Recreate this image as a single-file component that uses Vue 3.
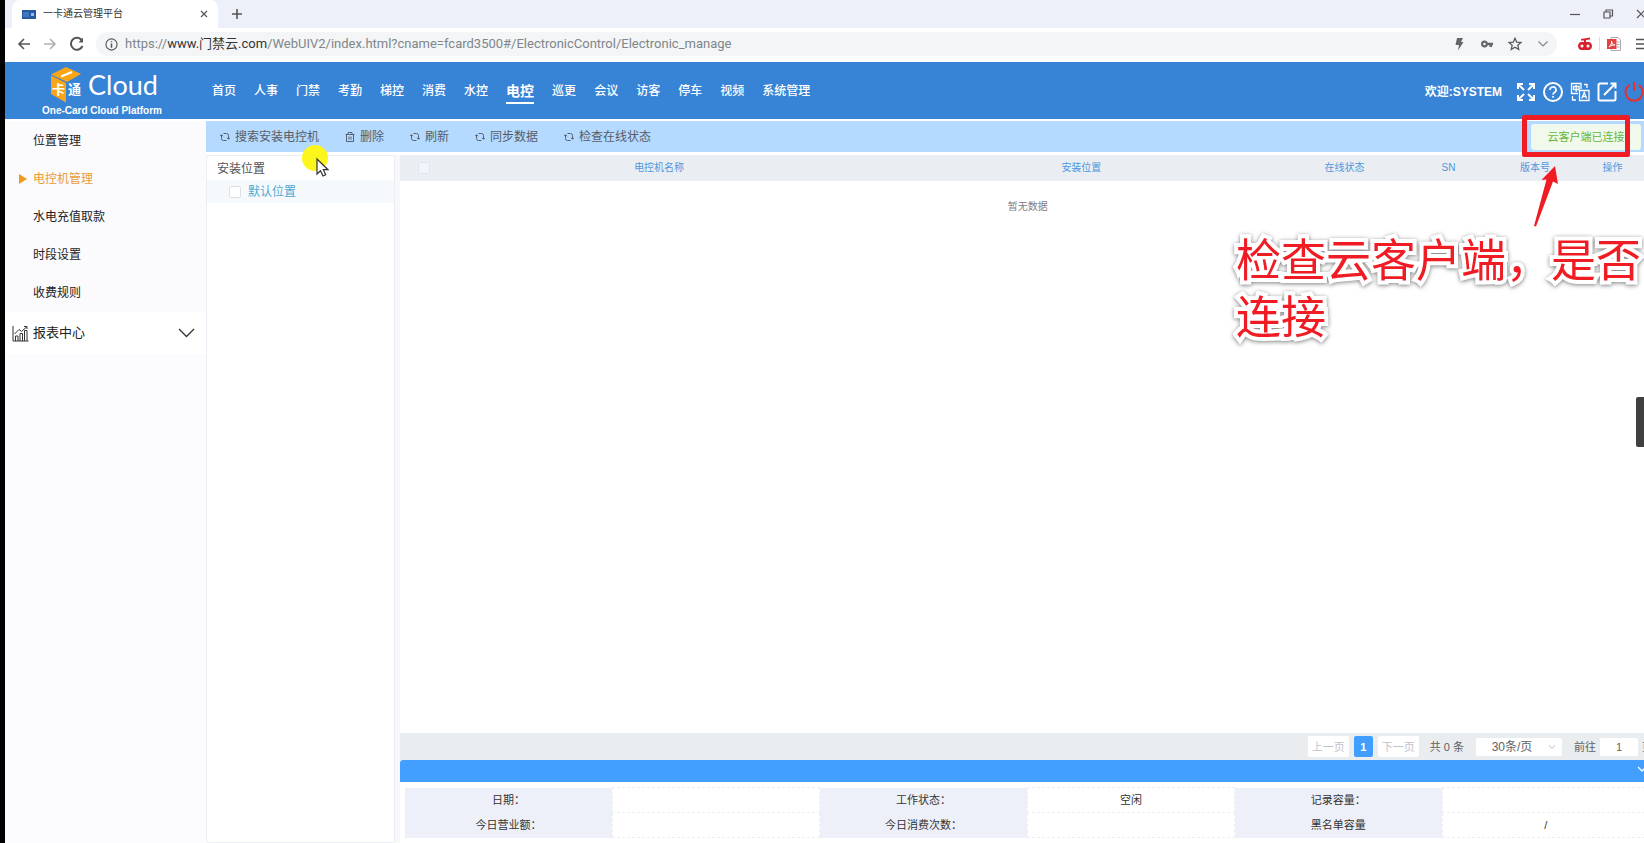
<script setup>
import { ref } from 'vue'

const modules = ['首页', '人事', '门禁', '考勤', '梯控', '消费', '水控', '电控', '巡更', '会议', '访客', '停车', '视频', '系统管理']
const activeModule = ref('电控')

const menu = ['位置管理', '电控机管理', '水电充值取款', '时段设置', '收费规则']
const activeMenu = ref('电控机管理')

const actions = [
  { label: '搜索安装电控机', icon: 'sync' },
  { label: '删除', icon: 'trash' },
  { label: '刷新', icon: 'sync' },
  { label: '同步数据', icon: 'sync' },
  { label: '检查在线状态', icon: 'sync' },
]

const columns = [
  { label: '电控机名称', cls: 'wide' },
  { label: '安装位置', cls: 'wide' },
  { label: '在线状态', cls: 'mid' },
  { label: 'SN', cls: 'mid' },
  { label: '版本号', cls: 'narrow' },
  { label: '操作', cls: 'ops' },
]

const info = [
  [['日期：', ''], ['工作状态：', '空闲'], ['记录容量：', '']],
  [['今日营业额：', ''], ['今日消费次数：', ''], ['黑名单容量', '/']],
]

const pageSize = ref('30条/页')
const pageNo = ref('1')
</script>

<template>
  <div class="screen">
    <div class="window">
      <div class="tabs">
        <div class="tab">
          <svg class="favicon" viewBox="0 0 14 9"><rect width="14" height="9" fill="#27599f" /><rect x="1" y="2" width="6" height="5" fill="#3f78bf" /><rect x="9" y="3" width="3" height="3" fill="#9fbcdc" /></svg>
          <span class="tab-title">一卡通云管理平台</span>
          <button class="icon-btn" aria-label="关闭标签页"><svg width="8" height="8" viewBox="0 0 8 8" class="line"><path d="M1 1l6 6M7 1l-6 6" /></svg></button>
        </div>
        <button class="icon-btn new-tab" aria-label="新标签页"><svg width="12" height="12" viewBox="0 0 12 12" class="line thick"><path d="M6 1v10M1 6h10" /></svg></button>
        <div class="win-controls">
          <button class="icon-btn" aria-label="最小化"><svg width="12" height="12" viewBox="0 0 12 12" class="line"><path d="M1 6.500h10" /></svg></button>
          <button class="icon-btn" aria-label="还原"><svg width="12" height="12" viewBox="0 0 12 12" class="line"><path d="M2 4h6v6H2zM4 4V2h6.500v6H8" /></svg></button>
          <button class="icon-btn" aria-label="关闭"><svg width="12" height="12" viewBox="0 0 12 12" class="line"><path d="M2 2l8 8M10 2l-8 8" /></svg></button>
        </div>
      </div>

      <div class="address">
        <div class="nav-btns">
          <button class="icon-btn" aria-label="后退"><svg width="14" height="14" viewBox="0 0 14 14" class="line thick"><path d="M13 7H2M7 2L2 7l5 5" /></svg></button>
          <button class="icon-btn faded" aria-label="前进"><svg width="14" height="14" viewBox="0 0 14 14" class="line thick"><path d="M1 7h11M7 2l5 5-5 5" /></svg></button>
          <button class="icon-btn" aria-label="重新加载"><svg width="16" height="16" viewBox="0 0 16 16" class="line bold"><path d="M13.500 10A6 6 0 1 1 13 4.500" /><path d="M14 1.500v5H9.500z" fill="#555" stroke="none" /></svg></button>
        </div>
        <div class="url-pill">
          <svg width="13" height="13" viewBox="0 0 14 14" class="line"><circle cx="7" cy="7" r="6" /><path d="M7 6v4.500M7 3.500v1.200" stroke-width="1.600" /></svg>
          <span class="url">https://<b>www.门禁云.com</b>/WebUIV2/index.html?cname=fcard3500#/ElectronicControl/Electronic_manage</span>
          <svg width="16" height="16" viewBox="0 0 16 16"><path d="M6 2h6l-2 4h2.500L7 14.500 8 9H4.500z" fill="#666" /></svg>
          <svg width="16" height="16" viewBox="0 0 16 16"><path fill-rule="evenodd" fill="#666" d="M5.500 4.500a3.500 3.500 0 0 1 3.300 2.300H14v2.400h-1V11h-2.500V9.200H8.800A3.500 3.500 0 1 1 5.500 4.500zm0 2.200a1.300 1.300 0 1 0 0 2.600 1.300 1.300 0 0 0 0-2.600z" /></svg>
          <svg width="16" height="16" viewBox="0 0 16 16" class="line"><path d="M8 2.200l1.700 3.900 4.300.4-3.200 2.800 1 4.200L8 11.300l-3.800 2.200 1-4.200L2 6.500l4.300-.4z" /></svg>
          <svg width="16" height="16" viewBox="0 0 16 16" class="line soft"><path d="M3.500 5.500L8 10l4.500-4.500" /></svg>
        </div>
        <div class="ext">
          <svg width="16" height="16" viewBox="0 0 16 16"><path d="M4 3l9-1.500v2L9 4v2h3c4 1 4 7 0 8H4c-4-1-4-7 0-8h3V4.500H4z" fill="#d8232e" /><circle cx="5" cy="10" r="1.500" fill="#fff" /><circle cx="11" cy="10" r="1.500" fill="#fff" /></svg>
          <i class="sep"></i>
          <svg width="16" height="16" viewBox="0 0 16 16"><path d="M5 1.500h7l2.500 2.500v10.500H5z" fill="#fff" stroke="#aaa" /><path d="M11 6h2.500M11 8.500h2.500M11 11h2.500" stroke="#aaa" /><rect x="1" y="3" width="9.500" height="10" fill="#e34343" /><path d="M3 11c2-2 3-4 2.500-6 .5 3 1.500 4 3.500 4-2-.3-4 .4-6 2z" fill="none" stroke="#fff" /></svg>
          <svg width="16" height="16" viewBox="0 0 16 16" class="line thick"><path d="M2 3.500h13M2 8h13M2 12.500h13" /></svg>
        </div>
      </div>

      <header class="header">
        <div class="brand">
          <div class="brand-top">
            <svg class="cube" viewBox="0 0 32 36">
              <path d="M16 0l15 7-14 8L1 7.500z" fill="#f9a51a" />
              <path d="M1 8.500L16 16v19.500L1 27z" fill="#f9a51a" />
              <path d="M11 9.500l11-4.500" stroke="#fff" stroke-width="2" />
              <text x="2" y="27" font-size="13">卡</text>
              <text x="18" y="27" font-size="13">通</text>
            </svg>
            <span class="brand-name">Cloud</span>
          </div>
          <div class="brand-sub">One-Card Cloud Platform</div>
        </div>
        <nav class="modules">
          <a v-for="m in modules" :key="m" href="#" :class="{ active: m === activeModule }" @click.prevent="activeModule = m">{{ m }}</a>
        </nav>
        <div class="user">
          <span class="welcome">欢迎:SYSTEM</span>
          <button class="icon-btn" aria-label="全屏"><svg width="20" height="20" viewBox="0 0 20 20" class="hl"><path d="M2 7V2h5M2 2l6 6M13 2h5v5M18 2l-6 6M2 13v5h5M2 18l6-6M18 13v5h-5M18 18l-6-6" /></svg></button>
          <button class="icon-btn" aria-label="帮助"><svg width="20" height="20" viewBox="0 0 20 20" class="hl"><circle cx="10" cy="10" r="9" /><path d="M7 8a3 3 0 1 1 4.500 2.500C10.300 11.200 10 11.500 10 12.800M10 14v1.800" stroke-width="1.600" /></svg></button>
          <button class="icon-btn" aria-label="语言"><svg width="20" height="20" viewBox="0 0 20 20" class="hl thin"><path d="M8 11.500H1.500V1.500H11V7M3.500 4.500H9v3H3.500zM6.200 3v7M9.500 8.500h9.500v10H9.500zM11.700 16.500l2.500-6 2.500 6M12.600 14.500h3.200M14 2.500h3v3.500M2.500 14v4H6" /></svg></button>
          <button class="icon-btn" aria-label="编辑"><svg width="20" height="20" viewBox="0 0 20 20" class="hl"><path d="M11 1.500H3A1.500 1.500 0 0 0 1.500 3v14A1.500 1.500 0 0 0 3 18.500h14a1.500 1.500 0 0 0 1.500-1.500V9M7 13L18 2M13.500 1.500h5v5" /></svg></button>
          <button class="icon-btn" aria-label="退出"><svg width="20" height="20" viewBox="0 0 20 20" class="hl red"><path d="M5.500 3a8.500 8.500 0 1 0 9 0M10 0v9" /></svg></button>
        </div>
      </header>

      <div class="main">
        <aside class="sidebar">
          <ul>
            <li v-for="m in menu" :key="m"><a href="#" :class="{ active: m === activeMenu }" @click.prevent="activeMenu = m">{{ m }}</a></li>
          </ul>
          <button class="group">
            <svg width="17" height="17" viewBox="0 0 17 17" class="dark"><path d="M1 1v15h15.500M3.500 16v-5h2.500v5M8 16V8.500h2.500V16M12.500 16V5.500H15V16M2.500 9L7 4.500l2.500 2L15 1.500M12 1.500h3V4" /></svg>
            <span>报表中心</span>
            <svg width="17" height="10" viewBox="0 0 17 10" class="dark"><path d="M1 1l7.500 7.500L16 1" stroke-width="1.300" /></svg>
          </button>
        </aside>

        <section class="content">
          <div class="toolbar">
            <button v-for="a in actions" :key="a.label" class="action">
              <svg v-if="a.icon === 'sync'" width="10" height="10" viewBox="0 0 10 10"><path d="M3.500 1.500h3a2 2 0 0 1 2 2V7M7 5.800l1.500 1.500L10 5.800M6.500 8.500h-3a2 2 0 0 1-2-2V3M0 4.200l1.500-1.500L3 4.200" /></svg>
              <svg v-else width="10" height="10" viewBox="0 0 10 10"><path d="M.5 2.500h9M3 2.500v-2h4v2M1.500 2.500v7h7v-7M4 4.500v3.200M6 4.500v3.200" /></svg>
              {{ a.label }}
            </button>
            <button class="cloud-state">云客户端已连接</button>
          </div>

          <div class="work">
            <div class="tree">
              <div class="tree-title">安装位置</div>
              <label class="tree-row"><input type="checkbox" />默认位置</label>
            </div>

            <div class="detail">
              <div class="grid">
                <table class="devices">
                  <thead>
                    <tr>
                      <th class="check"><input type="checkbox" aria-label="全选" /></th>
                      <th v-for="c in columns" :key="c.label" :class="c.cls">{{ c.label }}</th>
                    </tr>
                  </thead>
                  <tbody>
                    <tr><td :colspan="columns.length + 1">暂无数据</td></tr>
                  </tbody>
                </table>
              </div>

              <div class="pager">
                <button class="pg" disabled>上一页</button>
                <button class="pg current">1</button>
                <button class="pg" disabled>下一页</button>
                <span class="total">共 0 条</span>
                <div class="size">
                  <select v-model="pageSize" aria-label="每页条数"><option>30条/页</option></select>
                  <svg width="8" height="6" viewBox="0 0 8 6"><path d="M1 1l3 3.500L7 1" fill="none" stroke="#c0c4cc" /></svg>
                </div>
                <label class="jump">前往<input v-model="pageNo" type="text" />页</label>
              </div>

              <button class="fold" aria-label="收起"><svg width="10" height="7" viewBox="0 0 10 7"><path d="M1 1l4 4 4-4" fill="none" stroke="#fff" stroke-width="1.300" /></svg></button>

              <div class="info-wrap">
                <table class="info">
                  <tbody>
                    <tr v-for="(row, i) in info" :key="i">
                      <template v-for="[k, v] in row" :key="k">
                        <th scope="row">{{ k }}</th>
                        <td>{{ v }}</td>
                      </template>
                    </tr>
                  </tbody>
                </table>
              </div>
            </div>
          </div>
        </section>
      </div>
    </div>

    <svg class="pointer" width="44" height="44" viewBox="0 0 44 44">
      <circle cx="13" cy="13" r="13" fill="#fdf61c" />
      <path d="M15 14v15l3.500-3.300 2.500 5.300 2.700-1.300-2.400-5H26z" fill="#fff" stroke="#333" stroke-width="1.200" />
    </svg>
    <div class="mark-box"></div>
    <svg class="mark-arrow" width="26" height="62" viewBox="0 0 26 62"><path d="M23 0l3 18-5-2.500L4 60.500l-2-.5 12.500-46.500-5 .5z" fill="#ef1c24" /></svg>
    <p class="mark-text">检查云客户端，是否<br />连接</p>
    <div class="side-handle"></div>
  </div>
</template>

<style>
body {
  margin: 0;
}
</style>

<style scoped>
* {
  box-sizing: border-box;
}
.screen {
  position: relative;
  display: flex;
  min-height: 100vh;
  overflow: hidden;
  border-left: 5px solid #000;
  background: #fff;
  color: #333;
  font: 12px/16px "Liberation Sans", "Noto Sans CJK SC", sans-serif;
}
/* the browser window runs a little past the right edge of the screen */
.window {
  display: flex;
  flex: 1 0 calc(100% + 12px);
  flex-direction: column;
}
button,
input,
select {
  margin: 0;
  padding: 0;
  border: 0;
  background: none;
  color: inherit;
  font: inherit;
}
svg {
  display: block;
  flex: none;
}
.icon-btn {
  display: flex;
}
.line {
  fill: none;
  stroke: #555;
  stroke-width: 1.2;
}
.line.thick {
  stroke-width: 1.6;
}
.line.bold {
  stroke-width: 2;
}
.line.soft {
  stroke: #888;
}
.faded {
  opacity: 0.45;
}

.tabs {
  display: flex;
  align-items: center;
  height: 28px;
  padding-left: 7px;
  background: #edf0f8;
}
.tab {
  display: flex;
  align-items: center;
  align-self: stretch;
  width: 206px;
  padding: 0 10px;
  border-radius: 8px 8px 0 0;
  background: #fff;
}
.favicon {
  width: 14px;
  height: 9px;
}
.tab-title {
  flex: 1;
  margin-left: 7px;
  font-size: 10px;
}
.new-tab {
  margin-left: 13px;
}
.win-controls {
  display: flex;
  gap: 21px;
  margin-left: auto;
  padding-right: 9px;
}

.address {
  display: flex;
  align-items: center;
  height: 34px;
  padding: 0 6px 2px 12px;
}
.nav-btns {
  display: flex;
  align-items: center;
  gap: 12px;
  width: 79px;
}
.url-pill {
  display: flex;
  flex: 1;
  align-items: center;
  gap: 12px;
  height: 24px;
  padding: 0 6px 0 9px;
  border-radius: 12px;
  background: #f3f5f6;
}
.url {
  flex: 1;
  margin-left: -5px;
  color: #80868b;
  font: 13px/18px Roboto, "Noto Sans CJK SC", sans-serif;
}
.url b {
  color: #333;
  font-weight: 400;
}
.ext {
  display: flex;
  align-items: center;
  gap: 6px;
  margin-left: 20px;
}
.ext svg:last-child {
  margin-left: 6px;
}
.sep {
  width: 1px;
  height: 14px;
  background: #ddd;
}

.header {
  display: flex;
  align-items: center;
  height: 57px;
  padding: 2px 12px 0 0;
  background: #3783d6;
  color: #fff;
}
.brand {
  width: 207px;
  padding-left: 37px;
}
.brand-top {
  display: flex;
  align-items: center;
  height: 38px;
  padding-left: 8px;
  gap: 6px;
}
.cube {
  width: 32px;
  height: 36px;
  fill: #fff;
  font-family: "Noto Sans CJK SC", sans-serif;
  font-weight: 700;
}
.brand-name {
  font: 27px/32px Lato, sans-serif;
}
.brand-sub {
  font: 700 10px/14px "Liberation Sans", sans-serif;
}
.modules {
  display: flex;
  align-items: center;
  gap: 18px;
  font-weight: 500;
}
.modules a {
  padding: 3px 0;
  border-bottom: 2px solid transparent;
  color: #fff;
  text-decoration: none;
}
.modules .active {
  border-color: #fff;
  font-size: 14px;
  font-weight: 700;
}
.user {
  display: flex;
  align-items: center;
  gap: 7px;
  margin-left: auto;
}
.welcome {
  margin-right: 7px;
  font-weight: 700;
}
.hl {
  fill: none;
  stroke: #fff;
  stroke-width: 2;
}
.hl.thin {
  stroke-width: 1.3;
}
.hl.red {
  stroke: #e8302f;
}

.main {
  display: flex;
  flex: 1;
  padding-top: 2px;
}
.sidebar {
  flex: none;
  width: 201px;
  background: #fcfcfe;
  color: #222;
}
.sidebar ul {
  margin: 0;
  padding: 1px 0 0;
  background: #fbfafd;
  list-style: none;
}
.sidebar a {
  display: flex;
  align-items: center;
  height: 38px;
  padding-left: 28px;
  color: inherit;
  text-decoration: none;
}
.sidebar a.active {
  padding-left: 14px;
  color: #e99c35;
}
.sidebar a.active::before {
  width: 0;
  margin-right: 6px;
  border-top: 5px solid transparent;
  border-bottom: 5px solid transparent;
  border-left: 8px solid #f09a22;
  content: "";
}
.group {
  display: flex;
  align-items: center;
  width: 100%;
  height: 42px;
  padding: 0 11px 0 7px;
  background: #fff;
  font-size: 13px;
  text-align: left;
}
.group span {
  flex: 1;
  margin-left: 4px;
}
.dark {
  fill: none;
  stroke: #333;
}

.content {
  display: flex;
  flex: 1;
  flex-direction: column;
  min-width: 0;
}
.toolbar {
  display: flex;
  align-items: center;
  gap: 26px;
  height: 31px;
  padding: 0 15px 0 14px;
  background: #b5daff;
}
.action {
  display: flex;
  align-items: center;
  gap: 4px;
  color: #555c66;
}
.action svg {
  margin-right: 1px;
  fill: none;
  stroke: #59636f;
}
.cloud-state {
  width: 110px;
  height: 26px;
  margin-left: auto;
  border-radius: 3px;
  background: #f0f9eb;
  color: #67b83a;
  font-size: 11px;
}
.work {
  display: flex;
  flex: 1;
  gap: 5px;
  padding-top: 3px;
  background: linear-gradient(#fff 3px, #f7f8fa 3px);
}
.tree {
  flex: none;
  width: 189px;
  border: 1px solid #ebeef5;
  border-radius: 3px;
  background: #fff;
}
.tree-title {
  padding: 5px 10px 3px;
  color: #555;
}
.tree-row {
  display: flex;
  align-items: center;
  gap: 7px;
  height: 23px;
  padding-left: 22px;
  background: #f5f9fc;
  color: #4fa8d3;
}
input[type="checkbox"] {
  width: 12px;
  height: 12px;
  border: 1px solid #dcdfe6;
  border-radius: 2px;
  background: #fff;
  appearance: none;
}

.detail {
  display: flex;
  flex: 1;
  flex-direction: column;
  min-width: 0;
  background: #fff;
}
.grid {
  flex: 1;
}
.devices {
  width: 100%;
  border-collapse: collapse;
  table-layout: fixed;
  font-size: 10px;
}
.devices th {
  height: 26px;
  padding: 0;
  border-right: 1px solid #e9eef3;
  background: #eaedf1;
  color: #4c99df;
  font-weight: 400;
}
.devices th input {
  display: block;
  margin: 0 auto;
  border-color: #e2e6ee;
  background: #f0f4fc;
}
.devices .check {
  width: 48px;
}
.devices .mid {
  width: 104px;
}
.devices .narrow {
  width: 69px;
}
.devices .ops {
  width: 86px;
}
.devices td {
  height: 52px;
  padding: 0;
  color: #7d8086;
  text-align: center;
}

.pager {
  display: flex;
  align-items: center;
  height: 27px;
  padding-right: 3px;
  background: #e9edf0;
  color: #606266;
  font-size: 11px;
  justify-content: flex-end;
}
.pg {
  width: 41px;
  height: 21px;
  margin-right: 5px;
  border-radius: 2px;
  background: #fff;
}
.pg:disabled {
  color: #c0c4cc;
}
.pg.current {
  width: 19px;
  background: #409eff;
  color: #fff;
  font-weight: 700;
}
.total {
  margin: 0 12px 0 6px;
}
.size {
  display: flex;
  align-items: center;
  width: 86px;
  height: 18px;
  padding-right: 6px;
  border-radius: 2px;
  background: #fff;
}
.size select {
  flex: 1;
  height: 18px;
  appearance: none;
  font-size: 12px;
  text-align: center;
}
.jump {
  display: flex;
  align-items: center;
  margin-left: 12px;
}
.jump input {
  width: 38px;
  height: 18px;
  margin: 0 4px;
  border-radius: 2px;
  background: #fff;
  text-align: center;
}
.fold {
  display: flex;
  justify-content: flex-end;
  height: 22px;
  padding: 6px 9px 0 0;
  border-radius: 3px 0 0;
  background: #439fff;
}
.info-wrap {
  padding: 5px 6px 5px 5px;
}
.info {
  width: 100%;
  border-collapse: collapse;
  table-layout: fixed;
  font-size: 11px;
}
.info th,
.info td {
  height: 25px;
  padding: 0;
  font-weight: 400;
  text-align: center;
}
.info th {
  background: #edf0f8;
}
.info td {
  border: 1px dashed #edeff2;
}

/* overlays drawn over the page */
.pointer {
  position: absolute;
  top: 145px;
  left: 297px;
}
.mark-box {
  position: absolute;
  top: 115px;
  right: 14px;
  width: 108px;
  height: 42px;
  border: 5px solid #ef1c24;
  border-radius: 2px;
}
.mark-arrow {
  position: absolute;
  top: 166px;
  right: 86px;
}
.mark-text {
  position: absolute;
  top: 229px;
  right: 0;
  width: 408px;
  margin: 0;
  color: #ef1c24;
  font: 45px/57px "Noto Sans CJK SC", sans-serif;
  paint-order: stroke fill;
  -webkit-text-stroke: 8px #fff;
  filter: drop-shadow(0 1px 2px rgba(0, 0, 0, 0.5));
  white-space: nowrap;
}
.side-handle {
  position: absolute;
  top: 397px;
  right: 0;
  width: 8px;
  height: 50px;
  border-radius: 2px 0 0 2px;
  background: #404040;
}
</style>
